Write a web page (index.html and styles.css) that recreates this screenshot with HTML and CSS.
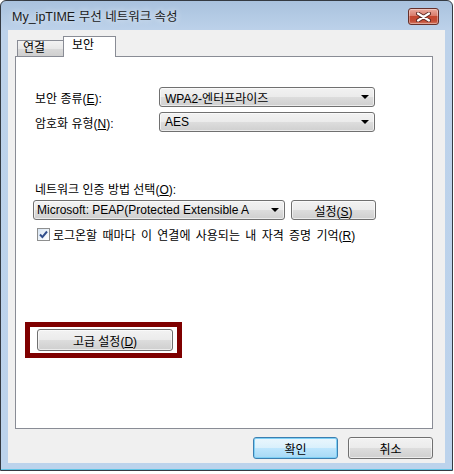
FILE: index.html
```html
<!DOCTYPE html>
<html lang="ko">
<head>
    <meta charset="UTF-8">
    <meta name="viewport" content="width=device-width, initial-scale=1.0">
    <title>My_ipTIME 무선 네트워크 속성</title>
    <link rel="stylesheet" href="styles.css">
</head>
<body>
    <div class="window">
        <div class="titlebar">
            <span class="title">My_ipTIME 무선 네트워크 속성</span>
            <button class="close" aria-label="닫기">
                <svg width="15" height="10" viewBox="0 0 15 10">
                    <path d="M2 1.5l11 7M13 1.5l-11 7" stroke="#5a2620" stroke-width="4" stroke-linecap="round" fill="none"/>
                    <path d="M2 1.5l11 7M13 1.5l-11 7" stroke="#ffffff" stroke-width="2.2" stroke-linecap="round" fill="none"/>
                </svg>
            </button>
        </div>

        <div class="client">
            <div class="tabs">
                <div class="tab tab-off">연결</div>
                <div class="tab tab-on">보안</div>
            </div>

            <div class="panel">
                <div class="field-row">
                    <span class="field-label">보안 종류(<u>E</u>):</span>
                    <div class="combo">WPA2-엔터프라이즈<span class="arrow"></span></div>
                </div>
                <div class="field-row">
                    <span class="field-label">암호화 유형(<u>N</u>):</span>
                    <div class="combo">AES<span class="arrow"></span></div>
                </div>

                <div class="auth">
                    <div class="auth-label">네트워크 인증 방법 선택(<u>O</u>):</div>
                    <div class="auth-row">
                        <div class="combo combo-wide">Microsoft: PEAP(Protected Extensible A<span class="arrow"></span></div>
                        <button class="btn btn-set">설정(<u>S</u>)</button>
                    </div>
                    <div class="check-row">
                        <span class="checkbox">
                            <svg width="11" height="11" viewBox="0 0 11 11">
                                <path d="M2 5.5l2.4 2.6L9 2.5" stroke="#2f4d8c" stroke-width="2" fill="none"/>
                            </svg>
                        </span>
                        <span class="check-text">로그온할 때마다 이 연결에 사용되는 내 자격 증명 기억(<u>R</u>)</span>
                    </div>
                </div>

                <div class="adv-box">
                    <button class="btn btn-adv">고급 설정(<u>D</u>)</button>
                </div>
            </div>

            <div class="footer">
                <button class="btn btn-foot btn-default">확인</button>
                <button class="btn btn-foot">취소</button>
            </div>
        </div>
    </div>
</body>
</html>
```

FILE: styles.css
```css
body {
    margin: 0;
    background-color: #ffffff;
    font-family: "Liberation Sans", "Noto Sans CJK KR", sans-serif;
    font-size: 12px;
    color: #000;
}

.window {
    width: 453px;
    height: 471px;
    box-sizing: border-box;
    border: 1px solid #343a42;
    border-radius: 6px 6px 0 0;
    background: linear-gradient(#a9c2de, #bdd2ea 30px, #bcd3ec);
    box-shadow: inset 0 -1px 0 #5fc3e4;
    padding: 0 7px 7px 7px;
    display: flex;
    flex-direction: column;
}

.titlebar {
    height: 29px;
    display: flex;
    align-items: center;
    justify-content: space-between;
    padding: 0 6px 0 4px;
}

.title {
    font-size: 12.5px;
    color: #1b1b1b;
    text-shadow: 0 0 6px rgba(255, 255, 255, 0.9);
}

.close {
    width: 31px;
    height: 17px;
    margin-top: 2px;
    padding: 0;
    border: 1px solid #66302a;
    border-radius: 3px;
    background: linear-gradient(#e9aa9e, #d97c6b 45%, #c4472f 50%, #c24c36 80%, #d57a64);
    box-shadow: inset 0 0 0 1px rgba(255, 255, 255, 0.35);
    display: flex;
    align-items: center;
    justify-content: center;
}

.client {
    flex: 1;
    background-color: #f0f0f0;
    padding: 6px 12px 0 7px;
    display: flex;
    flex-direction: column;
}

.tabs {
    display: flex;
    align-items: flex-end;
    height: 21px;
    margin-left: 2px;
    margin-bottom: -1px;
    position: relative;
    z-index: 1;
}

.tab {
    box-sizing: border-box;
    border: 1px solid #898c95;
    border-bottom: none;
    line-height: 14px;
}

.tab-off {
    width: 46px;
    height: 16px;
    margin-bottom: 1px;
    border-right: none;
    padding-left: 5px;
    background: linear-gradient(#f3f3f3, #e8e8e8 50%, #dadada 50%, #cfcfcf);
}

.tab-on {
    width: 53px;
    height: 21px;
    padding: 1px 0 0 8px;
    background-color: #ffffff;
}

.panel {
    box-sizing: border-box;
    height: 373px;
    border: 1px solid #898c95;
    background-color: #ffffff;
    padding: 30px 0 0 19px;
}

.field-row {
    display: flex;
    align-items: center;
    height: 20px;
}

.field-row + .field-row {
    margin-top: 5px;
}

.field-label {
    width: 124px;
}

.combo {
    box-sizing: border-box;
    width: 216px;
    height: 20px;
    border: 1px solid #707070;
    border-radius: 3px;
    background: linear-gradient(#f2f2f2, #ebebeb 50%, #dddddd 50%, #cfcfcf);
    box-shadow: inset 0 0 0 1px rgba(255, 255, 255, 0.6);
    padding-left: 5px;
    display: flex;
    align-items: center;
}

.combo-wide {
    width: 252px;
    padding-left: 3px;
}

.arrow {
    margin-left: auto;
    margin-right: 5px;
    border-left: 4px solid transparent;
    border-right: 4px solid transparent;
    border-top: 4px solid #000;
}

.auth {
    margin-top: 51px;
}

.auth-label {
    line-height: 14px;
}

.auth-row {
    display: flex;
    gap: 6px;
    margin: 3px 0 0 -2px;
}

.btn {
    box-sizing: border-box;
    height: 20px;
    padding: 0;
    border: 1px solid #707070;
    border-radius: 3px;
    background: linear-gradient(#f2f2f2, #ebebeb 50%, #dddddd 50%, #cfcfcf);
    box-shadow: inset 0 0 0 1px rgba(255, 255, 255, 0.6);
    font: inherit;
    color: #000;
}

.btn-set {
    width: 85px;
}

.check-row {
    display: flex;
    align-items: center;
    gap: 3px;
    height: 16px;
    margin: 6px 0 0 2px;
}

.check-text {
    word-spacing: 2px;
}

.checkbox {
    box-sizing: border-box;
    width: 13px;
    height: 13px;
    border: 1px solid #8e8f8f;
    background: linear-gradient(135deg, #d8e6f4, #ffffff);
    display: flex;
    align-items: center;
    justify-content: center;
}

.adv-box {
    width: max-content;
    margin: 80px 0 0 -10px;
    border: 5px solid #7f0000;
    padding: 2px 4px 2px 7px;
}

.btn-adv {
    display: block;
    width: 136px;
    height: 22px;
}

.footer {
    display: flex;
    justify-content: flex-end;
    gap: 10px;
    margin-top: 8px;
}

.btn-foot {
    width: 85px;
    height: 22px;
}

.btn-default {
    border-color: #3c7fb1;
    background: linear-gradient(#eaf6fd, #d9f0fc 50%, #bee6fd 50%, #a7d9f5);
    box-shadow: inset 0 0 0 1px #7fd0f5;
}
```
